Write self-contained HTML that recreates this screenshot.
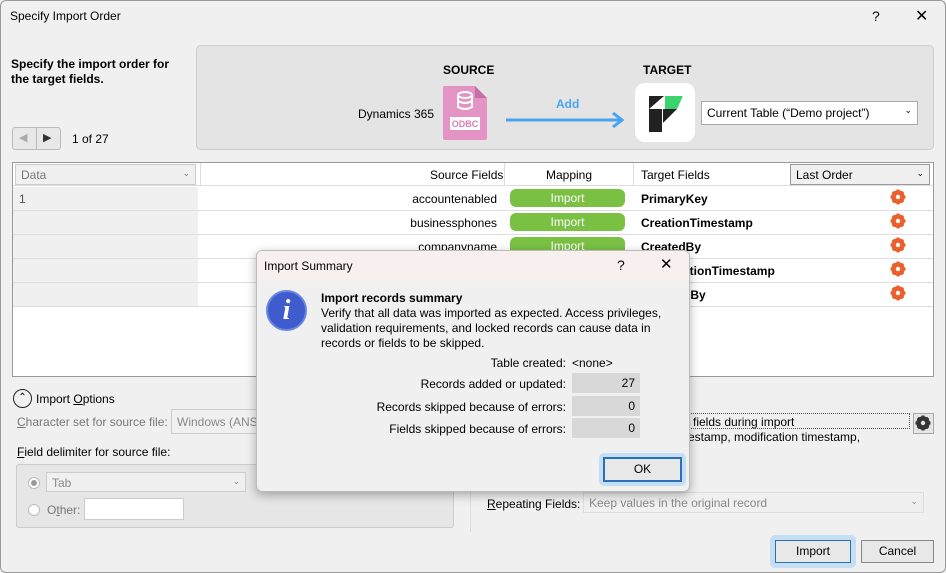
<!DOCTYPE html>
<html><head><meta charset="utf-8"><style>
*{box-sizing:border-box;margin:0;padding:0}
body{width:946px;height:573px;overflow:hidden;background:#f0f0f0;font-family:"Liberation Sans",sans-serif;font-size:12px;color:#000;position:relative}
.a{position:absolute;white-space:nowrap}
.b{font-weight:bold}
.pill{position:absolute;left:510px;width:115px;height:18px;border-radius:6px;background:#7ac143;color:#fff;text-align:center;line-height:18px}
.row{position:absolute;left:13px;width:920px;height:24px;border-bottom:1px solid #ddd;background:#fff}
.row .l{position:absolute;left:0;top:0;width:185px;height:23px;background:#f0f0f0}
.gear{position:absolute;left:890px;width:16px;height:16px}
.vb{position:absolute;left:572px;width:68px;height:20px;background:#d8d8d8;text-align:right;padding-right:5px;line-height:20px}
.lab{position:absolute;right:380px;text-align:right}
</style></head><body>
<div class="a" style="left:0;top:0;width:946px;height:573px;border:1px solid #999;border-radius:6px"></div>
<div class="a" style="left:10px;top:9px">Specify Import Order</div>
<div class="a" style="left:872px;top:8px;font-size:14px">?</div>
<div class="a" style="left:915px;top:6px;font-size:16px;font-weight:300">✕</div>
<div class="a b" style="left:11px;top:57px;line-height:15px">Specify the import order for<br>the target fields.</div>
<div class="a" style="left:196px;top:45px;width:738px;height:105px;background:#e4e4e4;border:1px solid #ccc;border-radius:5px"></div>
<div class="a b" style="left:443px;top:63px">SOURCE</div>
<div class="a b" style="left:643px;top:63px">TARGET</div>
<div class="a" style="left:358px;top:107px">Dynamics 365</div>
<svg class="a" style="left:443px;top:86px" width="44" height="54"><path d="M0 2Q0 0 2 0H32L44 12V52Q44 54 42 54H2Q0 54 0 52Z" fill="#e394c4"/><path d="M32 0V12H44Z" fill="#c66fa5"/><g fill="none" stroke="#fff" stroke-width="2"><ellipse cx="22" cy="9" rx="7" ry="3"/><path d="M15 9V21Q22 25 29 21V9M15 15Q22 19 29 15"/></g><rect x="7" y="31" width="30" height="13" fill="#fff"/><text x="22" y="41" font-size="9" font-weight="bold" fill="#d67eb4" text-anchor="middle" font-family="Liberation Sans">ODBC</text></svg>
<div class="a b" style="left:556px;top:97px;color:#4aa3ef">Add</div>
<svg class="a" style="left:505px;top:110px" width="122" height="20"><path d="M1 10H117M108 3L117 10L108 17" stroke="#4aa3ef" stroke-width="3" fill="none"/></svg>
<div class="a" style="left:635px;top:83px;width:60px;height:59px;background:#fff;border-radius:10px"></div>
<svg class="a" style="left:635px;top:83px" width="60" height="59"><path d="M14 13H29L14 26Z" fill="#222"/><path d="M30 13H47Q48 13 47 15L42 26H30Z" fill="#3bd46c"/><rect x="14" y="26" width="13" height="23" fill="#222"/><path d="M28 26H42L28 40Z" fill="#222"/></svg>
<div class="a" style="left:701px;top:101px;width:217px;height:24px;background:#fff;border:1px solid #aaa;padding:4px 5px">Current Table (“Demo project”)<span style="position:absolute;right:5px;top:3px;font-size:9px">⌄</span></div>
<div class="a" style="left:12px;top:127px;width:49px;height:23px;border:1px solid #bbb;border-radius:3px;background:#e8e8e8"></div>
<div class="a" style="left:36px;top:128px;width:1px;height:21px;background:#bbb"></div>
<div class="a" style="left:19px;top:131px;color:#aaa;font-size:11px">◀</div>
<div class="a" style="left:43px;top:131px;color:#333;font-size:11px">▶</div>
<div class="a" style="left:72px;top:132px">1 of 27</div>
<div class="a" style="left:12px;top:162px;width:922px;height:215px;background:#fff;border:1px solid #999"></div>
<div class="a" style="left:13px;top:163px;width:920px;height:23px;background:#fff;border-bottom:1px solid #ddd"></div>
<div class="a" style="left:15px;top:164px;width:181px;height:21px;background:#f0f0f0;border:1px solid #ccc;color:#777;padding:3px 5px">Data<span style="position:absolute;right:5px;font-size:9px">⌄</span></div>
<div class="a" style="left:200px;top:163px;width:1px;height:23px;background:#ddd"></div>
<div class="a" style="left:430px;top:168px">Source Fields</div>
<div class="a" style="left:504px;top:163px;width:1px;height:23px;background:#ddd"></div>
<div class="a" style="left:546px;top:168px">Mapping</div>
<div class="a" style="left:633px;top:163px;width:1px;height:23px;background:#ddd"></div>
<div class="a" style="left:641px;top:168px">Target Fields</div>
<div class="a" style="left:790px;top:164px;width:140px;height:21px;background:#f0f0f0;border:1px solid #999;padding:3px 5px">Last Order<span style="position:absolute;right:5px;font-size:9px">⌄</span></div>
<div class="row" style="top:187px"><div class="l"></div></div>
<div class="row" style="top:211px"><div class="l"></div></div>
<div class="row" style="top:235px"><div class="l"></div></div>
<div class="row" style="top:259px"><div class="l"></div></div>
<div class="row" style="top:283px"><div class="l"></div></div>
<div class="a" style="left:19px;top:192px;color:#555">1</div>
<div class="a" style="right:449px;top:192px">accountenabled</div>
<div class="a" style="right:449px;top:216px">businessphones</div>
<div class="a" style="right:449px;top:240px">companyname</div>
<div class="pill" style="top:189px">Import</div><div class="pill" style="top:213px">Import</div><div class="pill" style="top:237px">Import</div>
<div class="a b" style="left:641px;top:192px">PrimaryKey</div>
<div class="a b" style="left:641px;top:216px">CreationTimestamp</div>
<div class="a b" style="left:641px;top:240px">CreatedBy</div>
<div class="a b" style="left:641px;top:264px">ModificationTimestamp</div>
<div class="a b" style="left:641px;top:288px">ModifiedBy</div>
<svg width="0" height="0" style="position:absolute"><defs><g id="g"><circle cx="8" cy="8" r="5" fill="none" stroke="#e8602c" stroke-width="3.5"/><g stroke="#e8602c" stroke-width="3"><path d="M8 0.5V15.5M0.5 8H15.5M2.8 2.8L13.2 13.2M13.2 2.8L2.8 13.2"/></g><circle cx="8" cy="8" r="2.2" fill="#fff"/></g></defs></svg>
<svg class="gear" style="top:189px"><use href="#g"/></svg>
<svg class="gear" style="top:213px"><use href="#g"/></svg>
<svg class="gear" style="top:237px"><use href="#g"/></svg>
<svg class="gear" style="top:261px"><use href="#g"/></svg>
<svg class="gear" style="top:285px"><use href="#g"/></svg>
<div class="a" style="left:13px;top:389px;width:19px;height:19px;border:1.5px solid #222;border-radius:50%;text-align:center;font-size:10px;line-height:16px">⌃</div>
<div class="a" style="left:36px;top:392px">Import <u>O</u>ptions</div>
<div class="a" style="left:17px;top:415px;color:#777"><u>C</u>haracter set for source file:</div>
<div class="a" style="left:171px;top:409px;width:90px;height:25px;border:1px solid #ccc;background:#f0f0f0;color:#888;padding:5px">Windows (ANSI)</div>
<div class="a" style="left:17px;top:445px"><u>F</u>ield delimiter for source file:</div>
<div class="a" style="left:16px;top:464px;width:438px;height:64px;background:#e6e6e6;border:1px solid #ccc;border-radius:3px"></div>
<div class="a" style="left:28px;top:477px;width:12px;height:12px;border:1px solid #bbb;border-radius:50%;background:#fff"></div>
<div class="a" style="left:31px;top:480px;width:6px;height:6px;border-radius:50%;background:#999"></div>
<div class="a" style="left:46px;top:472px;width:200px;height:20px;border:1px solid #ccc;background:#f0f0f0;color:#888;padding:3px 5px">Tab<span style="position:absolute;right:5px;font-size:9px">⌄</span></div>
<div class="a" style="left:28px;top:504px;width:12px;height:12px;border:1px solid #bbb;border-radius:50%;background:#fff"></div>
<div class="a" style="left:47px;top:503px;color:#777">O<u>t</u>her:</div>
<div class="a" style="left:84px;top:498px;width:100px;height:22px;border:1px solid #ccc;background:#fff"></div>
<div class="a" style="left:470px;top:470px;width:1px;height:62px;background:#ddd"></div>
<div class="a" style="left:660px;top:413px;width:250px;height:16px;border:1px dotted #555;padding:1px 32px">fields during import</div>
<div class="a" style="left:672px;top:430px">timestamp, modification timestamp,</div>
<div class="a" style="left:913px;top:413px;width:21px;height:21px;border:1px solid #aaa;background:#e6e6e6"></div>
<svg class="a" style="left:915px;top:415px" width="16" height="16"><circle cx="8" cy="8" r="5" fill="none" stroke="#333" stroke-width="3.5"/><g stroke="#333" stroke-width="3"><path d="M8 0.5V15.5M0.5 8H15.5M2.8 2.8L13.2 13.2M13.2 2.8L2.8 13.2"/></g><circle cx="8" cy="8" r="2.2" fill="#e6e6e6"/></svg>
<div class="a" style="left:487px;top:497px"><u>R</u>epeating Fields:</div>
<div class="a" style="left:583px;top:492px;width:341px;height:21px;border:1px solid #ddd;background:#f0f0f0;color:#888;padding:3px 5px">Keep values in the original record<span style="position:absolute;right:5px;font-size:9px">⌄</span></div>
<div class="a" style="left:770px;top:535px;width:86px;height:33px;border-radius:5px;background:#c4dff4"></div>
<div class="a" style="left:775px;top:540px;width:76px;height:23px;border:1px solid #2b6fb6;background:#e8e8e8;text-align:center;line-height:21px">Import</div>
<div class="a" style="left:861px;top:540px;width:73px;height:23px;border:1px solid #888;background:#e8e8e8;text-align:center;line-height:21px">Cancel</div>
<!-- dialog -->
<div class="a" style="left:256px;top:250px;width:434px;height:242px;background:#f0f0f0;border:1px solid #bbb;border-radius:6px;box-shadow:0 3px 10px rgba(0,0,0,.3);overflow:hidden">
<div style="position:absolute;left:0;top:0;width:100%;height:30px;background:#f7f0ee"></div></div>
<div class="a" style="left:264px;top:259px">Import Summary</div>
<div class="a" style="left:617px;top:257px;font-size:14px">?</div>
<div class="a" style="left:660px;top:255px;font-size:15px">✕</div>
<div class="a" style="left:266px;top:290px;width:41px;height:41px;border-radius:50%;background:#3f5ccf;border:2px solid #6b86e0;color:#fff;text-align:center;font:italic bold 28px/37px 'Liberation Serif',serif">i</div>
<div class="a b" style="left:321px;top:291px">Import records summary</div>
<div class="a" style="left:321px;top:306px;line-height:15px">Verify that all data was imported as expected. Access privileges,<br>validation requirements, and locked records can cause data in<br>records or fields to be skipped.</div>
<div class="lab" style="top:356px">Table created:</div>
<div class="a" style="left:572px;top:356px">&lt;none&gt;</div>
<div class="lab" style="top:377px">Records added or updated:</div>
<div class="lab" style="top:400px">Records skipped because of errors:</div>
<div class="lab" style="top:422px">Fields skipped because of errors:</div>
<div class="vb" style="top:373px">27</div><div class="vb" style="top:396px">0</div><div class="vb" style="top:418px">0</div>
<div class="a" style="left:599px;top:453px;width:87px;height:33px;border-radius:5px;background:#c4dff4"></div>
<div class="a" style="left:603px;top:457px;width:79px;height:25px;border:2px solid #2b6fb6;background:#e8e8e8;text-align:center;line-height:21px">OK</div>
</body></html>
